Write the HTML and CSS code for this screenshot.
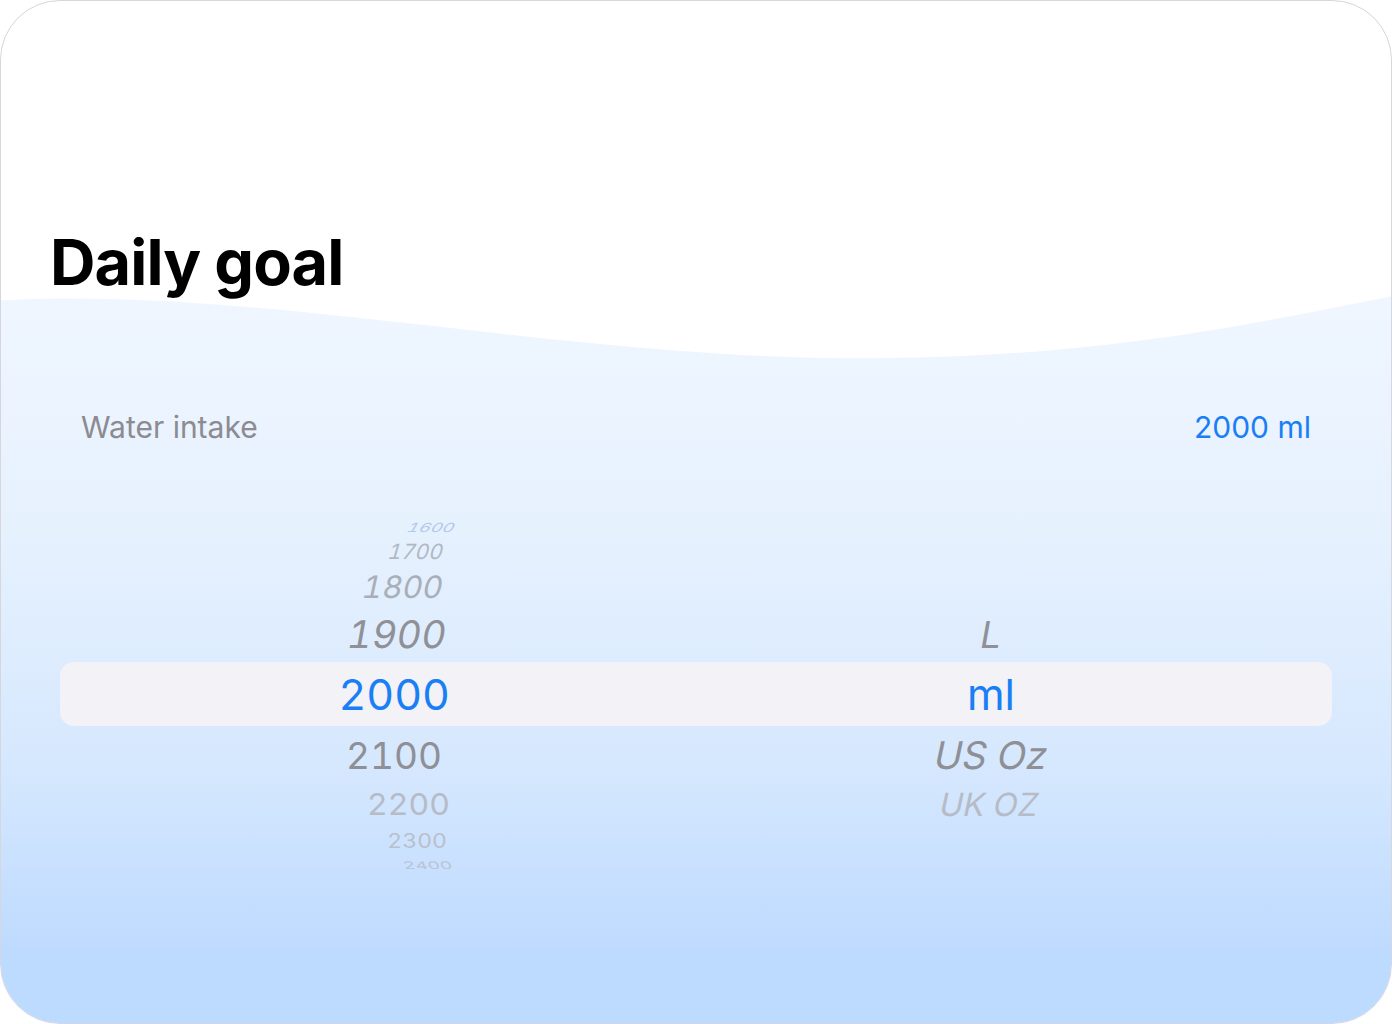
FILE: index.html
```html
<!DOCTYPE html>
<html lang="en">
<head>
    <meta charset="UTF-8">
    <meta name="viewport" content="width=device-width, initial-scale=1.0">
    <title>Daily goal</title>
    <link rel="stylesheet" href="styles.css">
</head>
<body>
    <div class="card">
        <!-- wave background -->
        <svg class="wave" viewBox="0 0 1392 1024" preserveAspectRatio="none">
            <defs>
                <linearGradient id="water" x1="0" y1="300" x2="0" y2="960" gradientUnits="userSpaceOnUse">
                    <stop offset="0" stop-color="#eff6ff"/>
                    <stop offset="0.35" stop-color="#e6f1fe"/>
                    <stop offset="0.7" stop-color="#d6e8fe"/>
                    <stop offset="1" stop-color="#bddaff"/>
                </linearGradient>
            </defs>
            <path d="M0 300 C 260 286, 560 358, 860 358 C 1100 358, 1260 322, 1392 296 L1392 1024 L0 1024 Z" fill="url(#water)"/>
        </svg>

        <div class="content">
            <h1 class="title">Daily goal</h1>

            <div class="intake">
                <span class="intake-label">Water intake</span>
                <span class="intake-value">2000 ml</span>
            </div>

            <div class="picker">
                <div class="row r-4">
                    <div class="num"><span>1600</span></div>
                    <div class="unit"></div>
                </div>
                <div class="row r-3">
                    <div class="num"><span>1700</span></div>
                    <div class="unit"></div>
                </div>
                <div class="row r-2">
                    <div class="num"><span>1800</span></div>
                    <div class="unit"></div>
                </div>
                <div class="row r-1">
                    <div class="num"><span>1900</span></div>
                    <div class="unit"><span>L</span></div>
                </div>
                <div class="row r0">
                    <div class="num"><span>2000</span></div>
                    <div class="unit"><span>ml</span></div>
                </div>
                <div class="row r1">
                    <div class="num"><span>2100</span></div>
                    <div class="unit"><span>US Oz</span></div>
                </div>
                <div class="row r2">
                    <div class="num"><span>2200</span></div>
                    <div class="unit"><span>UK OZ</span></div>
                </div>
                <div class="row r3">
                    <div class="num"><span>2300</span></div>
                    <div class="unit"></div>
                </div>
                <div class="row r4">
                    <div class="num"><span>2400</span></div>
                    <div class="unit"></div>
                </div>
            </div>
        </div>
    </div>
</body>
</html>
```

FILE: styles.css
```css
html, body {
    margin: 0;
    padding: 0;
    background-color: #ffffff;
}
body {
    font-family: Inter, "Noto Sans", sans-serif;
}
.card {
    position: relative;
    width: 1392px;
    height: 1024px;
    box-sizing: border-box;
    border: 1px solid #d6d6dc;
    border-radius: 60px;
    overflow: hidden;
    background-color: #ffffff;
}
.wave {
    position: absolute;
    top: 0;
    left: 0;
    width: 100%;
    height: 100%;
}
.content {
    position: relative;
    padding-top: 223px;
}
.title {
    margin: 0 0 0 49px;
    font-size: 63px;
    line-height: 76px;
    font-weight: 700;
    letter-spacing: -0.9px;
    color: #000000;
}
.intake {
    display: flex;
    justify-content: space-between;
    align-items: center;
    margin-top: 107px;
    padding: 0 80px;
    font-size: 30px;
    line-height: 40px;
}
.intake-label {
    color: #8b8b91;
}
.intake-value {
    color: #1a7ef5;
}
.picker {
    display: flex;
    flex-direction: column;
    margin-top: 71px;
}
.row {
    display: grid;
    grid-template-columns: 390px 1fr;
    align-items: center;
    margin: 0 59px;
}
.num {
    text-align: right;
}
.unit {
    padding-left: 200px;
    text-align: center;
}
.num span,
.unit span {
    display: inline-block;
    line-height: 1;
    font-variant-numeric: tabular-nums;
    white-space: nowrap;
}

/* wheel rows, top to bottom */
.r-4 { height: 20px; }
.r-4 .num span {
    font-size: 18px;
    color: #b3c9e8;
    transform: translateX(5px) scaleY(0.7) skewX(-22deg);
}
.r-3 { height: 28px; }
.r-3 .num span {
    font-size: 21px;
    color: #b1b8c4;
    transform: translateX(-7px) skewX(-16deg);
}
.r-2 { height: 40px; }
.r-2 .num span {
    font-size: 31px;
    color: #a9afb9;
    transform: translateX(-7px) skewX(-12deg);
}
.r-1 { height: 56px; }
.r-1 .num span {
    font-size: 38px;
    color: #909097;
    transform: translateX(-3px) skewX(-10deg);
}
.r-1 .unit span {
    font-size: 37px;
    color: #909097;
    transform: skewX(-10deg);
}
.r0 {
    height: 64px;
    border-radius: 14px;
    background-color: #f2f2f7;
}
.r0 .num span,
.r0 .unit span {
    font-size: 43px;
    color: #1a7ef5;
}
.r1 { height: 58px; }
.r1 .num span {
    font-size: 37px;
    color: #8f8f96;
    transform: translateX(-8px);
}
.r1 .unit span {
    font-size: 38px;
    color: #8f8f96;
    transform: skewX(-12deg);
}
.r2 { height: 42px; }
.r2 .num span {
    font-size: 32px;
    color: #b6bbc5;
    transform: scaleY(0.95);
}
.r2 .unit span {
    font-size: 32px;
    color: #b6bbc5;
    transform: translateX(-2px) skewX(-12deg);
}
.r3 { height: 30px; }
.r3 .num span {
    font-size: 23px;
    color: #b9c0cc;
    transform: translateX(-3px) scaleY(0.85);
}
.r4 { height: 16px; }
.r4 .num span {
    font-size: 19px;
    color: #b9c4d4;
    transform: translateX(2px) scaleY(0.55) skewX(10deg);
}
```
